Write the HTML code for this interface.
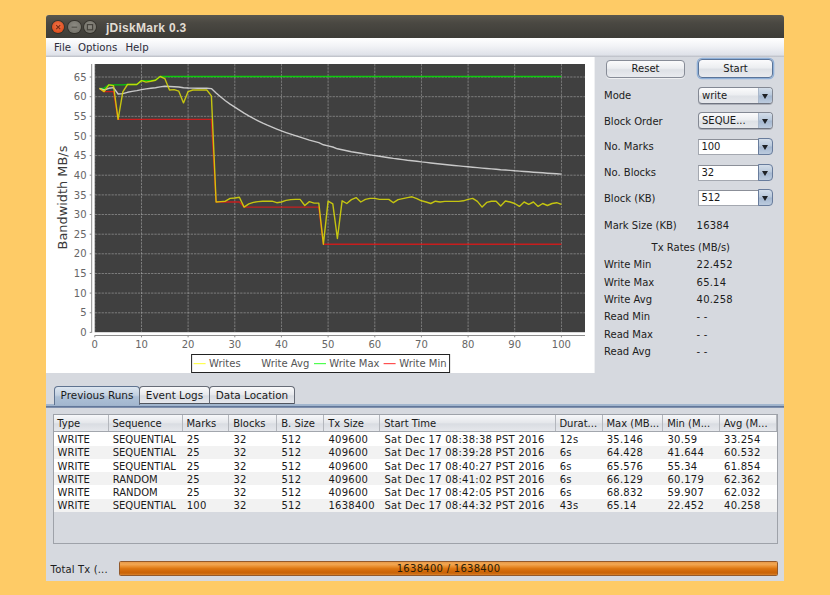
<!DOCTYPE html>
<html><head><meta charset="utf-8"><title>jDiskMark 0.3</title>
<style>
html,body{margin:0;padding:0}
body{width:830px;height:595px;overflow:hidden;background:#fecb66;position:relative;font-family:"DejaVu Sans","Liberation Sans",sans-serif;font-size:10px;color:#1a1a1a}
div,span{box-sizing:border-box}
.win{position:absolute;left:46px;top:15px;width:738.4px;height:566px;background:#d6d9df;border-radius:3px 3px 0 0;overflow:hidden}
.title{position:absolute;left:46px;top:15px;width:738.4px;height:23px;border-radius:3px 3px 0 0;background:linear-gradient(#5a574e,#4a4842 35%,#3d3c37);}
.title b{position:absolute;left:105.2px;top:19.6px;font-family:"Liberation Sans","DejaVu Sans",sans-serif;font-weight:bold;font-size:12px;color:#e2ddd4;line-height:14px;white-space:nowrap;letter-spacing:0.3px}
.abs{position:absolute}
.wb{position:absolute;top:21px;width:12.4px;height:12.4px;border-radius:50%;box-shadow:0 0 0 0.9px rgba(45,43,38,.75)}
.menu{position:absolute;left:46px;top:38px;width:738.4px;height:19px;background:linear-gradient(#ffffff,#f3f4f7 40%,#dfe2e9 88%,#b9bcc4);}
.menu span{position:absolute;top:41px;line-height:13px;font-size:10.2px;color:#2b2b3a}
.chart{position:absolute;left:0;top:0}
.gr{stroke:#d8d8d8;stroke-width:0.8;stroke-dasharray:2.3 1;opacity:.5}
.ax{stroke:#8c8c8c;stroke-width:1}
.tl{font-size:10px;fill:#666}
.al{font-size:12.9px;fill:#3a3a3a}
.lg{font-size:10px;fill:#555}
.s{fill:none;stroke-width:1.4;stroke-linejoin:round;opacity:.85}
.lb{position:absolute;line-height:14px;font-size:10px;white-space:nowrap;color:#1c1c1c}
.vl{letter-spacing:0.2px}
.btn{position:absolute;height:17.6px;border-radius:4px;border:1px solid #878c97;background:linear-gradient(#fbfbfc,#eceef1 45%,#dee1e6 55%,#e9ebef);text-align:center;line-height:15.4px;font-size:10px;box-shadow:0 1px 0 rgba(255,255,255,.6)}
.cb{position:absolute;left:698px;width:75px;height:17px;border-radius:4px;border:1px solid #838893;border-bottom-color:#6f7480;background:linear-gradient(#fbfbfc,#eceef1 45%,#dee1e6 55%,#e6e8ec);overflow:hidden;box-shadow:0 1px 0.5px rgba(60,65,80,.28)}
.cb .tx{position:absolute;left:3px;top:0.6px;line-height:14px;font-size:10px}
.cb .ar{position:absolute;right:0;top:0;width:14.4px;height:100%;border-left:1px solid #aab8cb;background:linear-gradient(#d3dde9,#b8c8db 48%,#a4b7d0 52%,#bccbde)}
.cb .ar i{position:absolute;left:3.4px;top:5.8px;width:0;height:0;border-left:3.4px solid transparent;border-right:3.4px solid transparent;border-top:5px solid #1e2126}
.cb.ed{background:none;border:none;border-radius:0;overflow:visible;box-shadow:none}
.cb.ed .fld{position:absolute;left:0;top:1px;width:61.4px;height:16px;background:#fff;border:1px solid #a4a8b0;border-top-color:#8b8f98}
.cb.ed .tx{left:3.4px;top:1.6px}
.cb.ed .ar{border:1px solid #687c9c;border-radius:0 4px 4px 0;width:14.6px;height:17.4px}
.cb.ed .ar i{left:2.8px;top:5.6px}
.tabline{position:absolute;left:46px;top:404px;width:738.4px;height:3.6px;background:linear-gradient(#a3b7cf,#a0b4cc 40%,#62779a 55%,#62779a 82%,#c0c8d6)}
.tab{position:absolute;top:386px;height:18px;border:1px solid #676c77;border-bottom-color:#50555f;border-radius:4px 4px 1px 1px;background:linear-gradient(#fafafb,#e6e8ec 50%,#d8dbe1 55%,#e6e8ed);font-size:10.45px;line-height:16.6px;text-align:center;white-space:nowrap}
.tab.sel{background:linear-gradient(#dde6f0,#c3d1e1 45%,#adc0d6 55%,#a3b7cf);border-color:#5f7390;border-bottom:none;border-radius:4px 4px 0 0;height:19px}
.tbl{position:absolute;left:53px;top:414px;width:725px;height:130px;border:1px solid #9ea2a9;background:#d6d9df}
.thead{position:absolute;left:54px;top:415px;width:723px;height:17px;background:linear-gradient(#f7f8fa,#e4e6ea 50%,#d9dce2 55%,#e6e8ec);border-bottom:1px solid #a2a6ad}
.th{position:absolute;top:415px;height:16.4px;border-right:1px solid #b4b7bd;}
.th span{position:absolute;left:3.8px;top:2px;line-height:14px;font-size:10px;white-space:nowrap}
.tr{position:absolute;left:54px;width:723px;height:13.25px}
.tr span{position:absolute;top:0.7px;line-height:14px;font-size:10px;white-space:nowrap}
.pb{position:absolute;left:119px;top:561px;width:659px;height:14.6px;border:1px solid #93592a;border-radius:1.5px;letter-spacing:0.28px;background:linear-gradient(#e89a48,#f2a651 18%,#e88a28 38%,#dd7814 50%,#d06808 70%,#c96306 85%,#d9832c);text-align:center;line-height:13.4px;font-size:10px;color:#2a1c08}
</style></head><body>
<div class="win"></div>
<div class="title"></div>
<div class="wb" style="left:52px;background:radial-gradient(circle at 50% 40%,#f0744a,#df4f1f 70%,#b8431b)"></div>
<div class="wb" style="left:68.2px;background:radial-gradient(circle at 50% 40%,#8c8a82,#77756d 70%,#5b5952)"></div>
<div class="wb" style="left:83.8px;background:radial-gradient(circle at 50% 40%,#8c8a82,#77756d 70%,#5b5952)"></div>
<svg class="abs" style="left:0;top:0" width="120" height="40" viewBox="0 0 120 40">
<path d="M56.2 25.2 L60.2 29.2 M60.2 25.2 L56.2 29.2" stroke="#7a2c14" stroke-width="1.2" fill="none"/>
<path d="M71.6 27.2 H77.2" stroke="#55534c" stroke-width="1.2" fill="none"/>
<rect x="87.4" y="24.6" width="5.2" height="5.2" stroke="#46443e" stroke-width="1.2" fill="none"/>
</svg>
<div class="title" style="background:none"><b style="left:59.9px;top:5.5px">jDiskMark 0.3</b></div>
<div class="menu"></div>
<div class="menu" style="background:none"><span style="left:8px;top:3px">File</span><span style="left:32px;top:3px">Options</span><span style="left:79.4px;top:3px">Help</span></div>
<svg class="chart" width="830" height="595" viewBox="0 0 830 595">
<rect x="46" y="57" width="548.6" height="316" fill="#fff"/>
<rect x="94.7" y="64" width="490.3" height="268.2" fill="#404040"/>
<line x1="95" x2="585" y1="332.4" y2="332.4" class="gr"/><line x1="95" x2="585" y1="312.8" y2="312.8" class="gr"/><line x1="95" x2="585" y1="293.1" y2="293.1" class="gr"/><line x1="95" x2="585" y1="273.5" y2="273.5" class="gr"/><line x1="95" x2="585" y1="253.8" y2="253.8" class="gr"/><line x1="95" x2="585" y1="234.2" y2="234.2" class="gr"/><line x1="95" x2="585" y1="214.5" y2="214.5" class="gr"/><line x1="95" x2="585" y1="194.9" y2="194.9" class="gr"/><line x1="95" x2="585" y1="175.2" y2="175.2" class="gr"/><line x1="95" x2="585" y1="155.6" y2="155.6" class="gr"/><line x1="95" x2="585" y1="135.9" y2="135.9" class="gr"/><line x1="95" x2="585" y1="116.3" y2="116.3" class="gr"/><line x1="95" x2="585" y1="96.7" y2="96.7" class="gr"/><line x1="95" x2="585" y1="77.0" y2="77.0" class="gr"/><line y1="64" y2="332.4" x1="94.8" x2="94.8" class="gr"/><line y1="64" y2="332.4" x1="141.5" x2="141.5" class="gr"/><line y1="64" y2="332.4" x1="188.1" x2="188.1" class="gr"/><line y1="64" y2="332.4" x1="234.8" x2="234.8" class="gr"/><line y1="64" y2="332.4" x1="281.4" x2="281.4" class="gr"/><line y1="64" y2="332.4" x1="328.1" x2="328.1" class="gr"/><line y1="64" y2="332.4" x1="374.8" x2="374.8" class="gr"/><line y1="64" y2="332.4" x1="421.4" x2="421.4" class="gr"/><line y1="64" y2="332.4" x1="468.1" x2="468.1" class="gr"/><line y1="64" y2="332.4" x1="514.7" x2="514.7" class="gr"/><line y1="64" y2="332.4" x1="561.4" x2="561.4" class="gr"/>
<line x1="91.7" x2="91.7" y1="64" y2="332.6" class="ax"/>
<line x1="94.7" x2="585" y1="335.5" y2="335.5" class="ax"/>
<line x1="89.7" x2="91.7" y1="332.4" y2="332.4" class="ax"/><text x="86.6" y="336.0" text-anchor="end" class="tl">0</text><line x1="89.7" x2="91.7" y1="312.8" y2="312.8" class="ax"/><text x="86.6" y="316.4" text-anchor="end" class="tl">5</text><line x1="89.7" x2="91.7" y1="293.1" y2="293.1" class="ax"/><text x="86.6" y="296.7" text-anchor="end" class="tl">10</text><line x1="89.7" x2="91.7" y1="273.5" y2="273.5" class="ax"/><text x="86.6" y="277.1" text-anchor="end" class="tl">15</text><line x1="89.7" x2="91.7" y1="253.8" y2="253.8" class="ax"/><text x="86.6" y="257.4" text-anchor="end" class="tl">20</text><line x1="89.7" x2="91.7" y1="234.2" y2="234.2" class="ax"/><text x="86.6" y="237.8" text-anchor="end" class="tl">25</text><line x1="89.7" x2="91.7" y1="214.5" y2="214.5" class="ax"/><text x="86.6" y="218.1" text-anchor="end" class="tl">30</text><line x1="89.7" x2="91.7" y1="194.9" y2="194.9" class="ax"/><text x="86.6" y="198.5" text-anchor="end" class="tl">35</text><line x1="89.7" x2="91.7" y1="175.2" y2="175.2" class="ax"/><text x="86.6" y="178.8" text-anchor="end" class="tl">40</text><line x1="89.7" x2="91.7" y1="155.6" y2="155.6" class="ax"/><text x="86.6" y="159.2" text-anchor="end" class="tl">45</text><line x1="89.7" x2="91.7" y1="135.9" y2="135.9" class="ax"/><text x="86.6" y="139.5" text-anchor="end" class="tl">50</text><line x1="89.7" x2="91.7" y1="116.3" y2="116.3" class="ax"/><text x="86.6" y="119.9" text-anchor="end" class="tl">55</text><line x1="89.7" x2="91.7" y1="96.7" y2="96.7" class="ax"/><text x="86.6" y="100.3" text-anchor="end" class="tl">60</text><line x1="89.7" x2="91.7" y1="77.0" y2="77.0" class="ax"/><text x="86.6" y="80.6" text-anchor="end" class="tl">65</text><line y1="335.5" y2="337.3" x1="94.8" x2="94.8" class="ax"/><text y="347.6" x="94.8" text-anchor="middle" class="tl">0</text><line y1="335.5" y2="337.3" x1="141.5" x2="141.5" class="ax"/><text y="347.6" x="141.5" text-anchor="middle" class="tl">10</text><line y1="335.5" y2="337.3" x1="188.1" x2="188.1" class="ax"/><text y="347.6" x="188.1" text-anchor="middle" class="tl">20</text><line y1="335.5" y2="337.3" x1="234.8" x2="234.8" class="ax"/><text y="347.6" x="234.8" text-anchor="middle" class="tl">30</text><line y1="335.5" y2="337.3" x1="281.4" x2="281.4" class="ax"/><text y="347.6" x="281.4" text-anchor="middle" class="tl">40</text><line y1="335.5" y2="337.3" x1="328.1" x2="328.1" class="ax"/><text y="347.6" x="328.1" text-anchor="middle" class="tl">50</text><line y1="335.5" y2="337.3" x1="374.8" x2="374.8" class="ax"/><text y="347.6" x="374.8" text-anchor="middle" class="tl">60</text><line y1="335.5" y2="337.3" x1="421.4" x2="421.4" class="ax"/><text y="347.6" x="421.4" text-anchor="middle" class="tl">70</text><line y1="335.5" y2="337.3" x1="468.1" x2="468.1" class="ax"/><text y="347.6" x="468.1" text-anchor="middle" class="tl">80</text><line y1="335.5" y2="337.3" x1="514.7" x2="514.7" class="ax"/><text y="347.6" x="514.7" text-anchor="middle" class="tl">90</text><line y1="335.5" y2="337.3" x1="561.4" x2="561.4" class="ax"/><text y="347.6" x="561.4" text-anchor="middle" class="tl">100</text>
<text transform="translate(67,197.5) rotate(-90)" text-anchor="middle" class="al">Bandwidth MB/s</text>
<path d="M99.5,88.4 L104.1,88.4 L108.8,84.9 L113.5,84.9 L118.1,84.9 L122.8,84.9 L127.5,84.5 L132.1,84.5 L136.8,84.5 L141.5,80.6 L146.1,80.6 L150.8,80.6 L155.5,80.2 L160.1,76.5 L164.8,76.5 L169.5,76.5 L174.1,76.5 L178.8,76.5 L183.5,76.5 L188.1,76.5 L192.8,76.5 L197.5,76.5 L202.1,76.5 L206.8,76.5 L211.4,76.5 L216.1,76.5 L220.8,76.5 L225.4,76.5 L230.1,76.5 L234.8,76.5 L239.4,76.5 L244.1,76.5 L248.8,76.5 L253.4,76.5 L258.1,76.5 L262.8,76.5 L267.4,76.5 L272.1,76.5 L276.8,76.5 L281.4,76.5 L286.1,76.5 L290.8,76.5 L295.4,76.5 L300.1,76.5 L304.8,76.5 L309.4,76.5 L314.1,76.5 L318.8,76.5 L323.4,76.5 L328.1,76.5 L332.8,76.5 L337.4,76.5 L342.1,76.5 L346.8,76.5 L351.4,76.5 L356.1,76.5 L360.8,76.5 L365.4,76.5 L370.1,76.5 L374.8,76.5 L379.4,76.5 L384.1,76.5 L388.8,76.5 L393.4,76.5 L398.1,76.5 L402.8,76.5 L407.4,76.5 L412.1,76.5 L416.8,76.5 L421.4,76.5 L426.1,76.5 L430.8,76.5 L435.4,76.5 L440.1,76.5 L444.8,76.5 L449.4,76.5 L454.1,76.5 L458.7,76.5 L463.4,76.5 L468.1,76.5 L472.7,76.5 L477.4,76.5 L482.1,76.5 L486.7,76.5 L491.4,76.5 L496.1,76.5 L500.7,76.5 L505.4,76.5 L510.1,76.5 L514.7,76.5 L519.4,76.5 L524.1,76.5 L528.7,76.5 L533.4,76.5 L538.1,76.5 L542.7,76.5 L547.4,76.5 L552.1,76.5 L556.7,76.5 L561.4,76.5" class="s" stroke="#00e000"/>
<path d="M99.5,88.4 L104.1,91.6 L108.8,91.6 L113.5,91.6 L118.1,119.4 L122.8,119.4 L127.5,119.4 L132.1,119.4 L136.8,119.4 L141.5,119.4 L146.1,119.4 L150.8,119.4 L155.5,119.4 L160.1,119.4 L164.8,119.4 L169.5,119.4 L174.1,119.4 L178.8,119.4 L183.5,119.4 L188.1,119.4 L192.8,119.4 L197.5,119.4 L202.1,119.4 L206.8,119.4 L211.4,119.4 L216.1,202.0 L220.8,202.0 L225.4,202.0 L230.1,202.0 L234.8,202.0 L239.4,202.0 L244.1,207.1 L248.8,207.1 L253.4,207.1 L258.1,207.1 L262.8,207.1 L267.4,207.1 L272.1,207.1 L276.8,207.1 L281.4,207.1 L286.1,207.1 L290.8,207.1 L295.4,207.1 L300.1,207.1 L304.8,207.1 L309.4,207.1 L314.1,207.1 L318.8,207.1 L323.4,244.2 L328.1,244.2 L332.8,244.2 L337.4,244.2 L342.1,244.2 L346.8,244.2 L351.4,244.2 L356.1,244.2 L360.8,244.2 L365.4,244.2 L370.1,244.2 L374.8,244.2 L379.4,244.2 L384.1,244.2 L388.8,244.2 L393.4,244.2 L398.1,244.2 L402.8,244.2 L407.4,244.2 L412.1,244.2 L416.8,244.2 L421.4,244.2 L426.1,244.2 L430.8,244.2 L435.4,244.2 L440.1,244.2 L444.8,244.2 L449.4,244.2 L454.1,244.2 L458.7,244.2 L463.4,244.2 L468.1,244.2 L472.7,244.2 L477.4,244.2 L482.1,244.2 L486.7,244.2 L491.4,244.2 L496.1,244.2 L500.7,244.2 L505.4,244.2 L510.1,244.2 L514.7,244.2 L519.4,244.2 L524.1,244.2 L528.7,244.2 L533.4,244.2 L538.1,244.2 L542.7,244.2 L547.4,244.2 L552.1,244.2 L556.7,244.2 L561.4,244.2" class="s" stroke="#e01818"/>
<path d="M99.5,88.4 L104.1,90.0 L108.8,88.3 L113.5,87.6 L118.1,94.0 L122.8,93.6 L127.5,92.3 L132.1,91.4 L136.8,90.6 L141.5,89.6 L146.1,88.9 L150.8,88.3 L155.5,87.7 L160.1,86.9 L164.8,86.3 L169.5,86.5 L174.1,86.7 L178.8,87.0 L183.5,87.8 L188.1,88.0 L192.8,88.1 L197.5,88.2 L202.1,88.2 L206.8,88.3 L211.4,88.6 L216.1,93.0 L220.8,97.0 L225.4,100.7 L230.1,104.1 L234.8,107.2 L239.4,110.1 L244.1,113.2 L248.8,115.9 L253.4,118.4 L258.1,120.8 L262.8,123.1 L267.4,125.2 L272.1,127.2 L276.8,129.1 L281.4,130.9 L286.1,132.6 L290.8,134.2 L295.4,135.7 L300.1,137.2 L304.8,138.7 L309.4,140.1 L314.1,141.4 L318.8,142.7 L323.4,144.8 L328.1,145.9 L332.8,147.0 L337.4,148.8 L342.1,149.8 L346.8,150.8 L351.4,151.7 L356.1,152.5 L360.8,153.3 L365.4,154.1 L370.1,154.9 L374.8,155.6 L379.4,156.3 L384.1,157.0 L388.8,157.7 L393.4,158.4 L398.1,159.0 L402.8,159.6 L407.4,160.2 L412.1,160.7 L416.8,161.3 L421.4,161.9 L426.1,162.4 L430.8,163.0 L435.4,163.5 L440.1,164.0 L444.8,164.5 L449.4,165.0 L454.1,165.5 L458.7,165.9 L463.4,166.4 L468.1,166.8 L472.7,167.2 L477.4,167.6 L482.1,168.1 L486.7,168.5 L491.4,168.9 L496.1,169.3 L500.7,169.7 L505.4,170.0 L510.1,170.4 L514.7,170.8 L519.4,171.1 L524.1,171.5 L528.7,171.8 L533.4,172.2 L538.1,172.5 L542.7,172.8 L547.4,173.2 L552.1,173.5 L556.7,173.8 L561.4,174.1" class="s" stroke="#e0e0e0"/>
<path d="M99.5,88.4 L104.1,91.6 L108.8,84.9 L113.5,85.7 L118.1,119.4 L122.8,91.9 L127.5,84.5 L132.1,84.5 L136.8,84.5 L141.5,80.6 L146.1,82.1 L150.8,81.3 L155.5,80.2 L160.1,76.5 L164.8,78.6 L169.5,90.0 L174.1,89.6 L178.8,91.2 L183.5,102.9 L188.1,91.6 L192.8,90.0 L197.5,90.0 L202.1,90.0 L206.8,90.0 L211.4,95.9 L216.1,202.0 L220.8,201.6 L225.4,201.2 L230.1,198.4 L234.8,198.0 L239.4,197.2 L244.1,207.1 L248.8,203.9 L253.4,202.4 L258.1,201.6 L262.8,201.2 L267.4,201.2 L272.1,201.2 L276.8,202.7 L281.4,202.0 L286.1,200.4 L290.8,199.6 L295.4,199.4 L300.1,199.4 L304.8,205.5 L309.4,201.6 L314.1,203.1 L318.8,203.1 L323.4,244.2 L328.1,201.2 L332.8,203.9 L337.4,238.5 L342.1,200.8 L346.8,203.5 L351.4,199.6 L356.1,197.6 L360.8,202.0 L365.4,199.4 L370.1,198.4 L374.8,198.4 L379.4,199.4 L384.1,199.4 L388.8,199.4 L393.4,202.7 L398.1,199.6 L402.8,198.6 L407.4,197.6 L412.1,196.8 L416.8,198.6 L421.4,200.8 L426.1,202.0 L430.8,203.5 L435.4,201.2 L440.1,202.0 L444.8,201.4 L449.4,201.4 L454.1,201.4 L458.7,201.4 L463.4,200.8 L468.1,199.4 L472.7,198.4 L477.4,201.4 L482.1,207.1 L486.7,202.4 L491.4,201.2 L496.1,201.2 L500.7,205.9 L505.4,201.0 L510.1,202.0 L514.7,203.5 L519.4,206.4 L524.1,202.0 L528.7,204.3 L533.4,202.0 L538.1,206.4 L542.7,203.5 L547.4,205.5 L552.1,203.5 L556.7,202.7 L561.4,204.3" class="s" stroke="#dcdc08"/>
<rect x="191.6" y="354.5" width="258" height="18" fill="#fff" stroke="#222" stroke-width="1"/>
<line x1="193.6" x2="205.6" y1="363.6" y2="363.6" stroke="#ffff50" stroke-width="1.2"/>
<text x="209" y="367.2" class="lg">Writes</text>
<text x="261.2" y="367.2" class="lg">Write Avg</text>
<line x1="314" x2="326" y1="363.6" y2="363.6" stroke="#50ff50" stroke-width="1.2"/>
<text x="329.2" y="367.2" class="lg">Write Max</text>
<line x1="383.6" x2="395.6" y1="363.6" y2="363.6" stroke="#ff5050" stroke-width="1.2"/>
<text x="399.2" y="367.2" class="lg">Write Min</text>
</svg>
<div class="btn" style="left:606px;top:60px;width:79px;height:18px;line-height:16px">Reset</div>
<div class="btn" style="left:698px;top:59px;width:75px;height:19px;border-color:#5a7499;box-shadow:0 0 0 1.3px #8fb0d8;line-height:18px">Start</div>
<div class="lb" style="left:604px;top:88.8px">Mode</div><div class="lb" style="left:604px;top:115.1px">Block Order</div><div class="lb" style="left:604px;top:140.2px">No. Marks</div><div class="lb" style="left:604px;top:165.8px">No. Blocks</div><div class="lb" style="left:604px;top:191.8px">Block (KB)</div><div class="lb" style="left:604px;top:219.0px">Mark Size (KB)</div><div class="lb" style="left:604px;top:258.2px">Write Min</div><div class="lb" style="left:604px;top:275.5px">Write Max</div><div class="lb" style="left:604px;top:292.8px">Write Avg</div><div class="lb" style="left:604px;top:310.2px">Read Min</div><div class="lb" style="left:604px;top:327.5px">Read Max</div><div class="lb" style="left:604px;top:344.8px">Read Avg</div><div class="lb vl" style="left:696.6px;top:219.0px">16384</div><div class="lb vl" style="left:696.6px;top:258.2px">22.452</div><div class="lb vl" style="left:696.6px;top:275.5px">65.14</div><div class="lb vl" style="left:696.6px;top:292.8px">40.258</div><div class="lb vl" style="left:696.6px;top:310.2px">- -</div><div class="lb vl" style="left:696.6px;top:327.5px">- -</div><div class="lb vl" style="left:696.6px;top:344.8px">- -</div><div class="lb" style="left:651.6px;top:240.8px">Tx Rates (MB/s)</div><div class="cb" style="top:87.0px"><span class="tx">write</span><span class="ar"><i></i></span></div><div class="cb" style="top:112.0px"><span class="tx">SEQUE...</span><span class="ar"><i></i></span></div><div class="cb ed" style="top:138.0px"><span class="fld"></span><span class="tx">100</span><span class="ar"><i></i></span></div><div class="cb ed" style="top:164.0px"><span class="fld"></span><span class="tx">32</span><span class="ar"><i></i></span></div><div class="cb ed" style="top:189.0px"><span class="fld"></span><span class="tx">512</span><span class="ar"><i></i></span></div>
<div class="tabline"></div>
<div class="tab sel" style="left:54px;width:86px">Previous Runs</div>
<div class="tab" style="left:139px;width:71px">Event Logs</div>
<div class="tab" style="left:209px;width:86px">Data Location</div>
<div class="tbl"></div><div class="thead"></div><div class="th" style="left:53.5px;width:55.1px"><span>Type</span></div><div class="th" style="left:108.6px;width:74.0px"><span>Sequence</span></div><div class="th" style="left:182.6px;width:46.8px"><span>Marks</span></div><div class="th" style="left:229.4px;width:48.0px"><span>Blocks</span></div><div class="th" style="left:277.4px;width:47.0px"><span>B. Size</span></div><div class="th" style="left:324.4px;width:56.0px"><span>Tx Size</span></div><div class="th" style="left:380.4px;width:175.2px"><span>Start Time</span></div><div class="th" style="left:555.6px;width:47.0px"><span>Durat...</span></div><div class="th" style="left:602.6px;width:60.8px"><span>Max (MB...</span></div><div class="th" style="left:663.4px;width:56.6px"><span>Min (M...</span></div><div class="th" style="left:720.0px;width:57.0px"><span>Avg (M...</span></div><div class="tr" style="top:432.40px;background:#fff"><span style="left:3.6px">WRITE</span><span style="left:58.7px">SEQUENTIAL</span><span style="left:132.7px;letter-spacing:0.25px">25</span><span style="left:179.5px;letter-spacing:0.25px">32</span><span style="left:227.5px;letter-spacing:0.25px">512</span><span style="left:274.5px;letter-spacing:0.25px">409600</span><span style="left:330.5px;letter-spacing:0.25px">Sat Dec 17 08:38:38 PST 2016</span><span style="left:505.7px;letter-spacing:0.25px">12s</span><span style="left:552.7px;letter-spacing:0.25px">35.146</span><span style="left:613.5px;letter-spacing:0.25px">30.59</span><span style="left:670.1px;letter-spacing:0.25px">33.254</span></div><div class="tr" style="top:445.65px;background:#f2f2f2"><span style="left:3.6px">WRITE</span><span style="left:58.7px">SEQUENTIAL</span><span style="left:132.7px;letter-spacing:0.25px">25</span><span style="left:179.5px;letter-spacing:0.25px">32</span><span style="left:227.5px;letter-spacing:0.25px">512</span><span style="left:274.5px;letter-spacing:0.25px">409600</span><span style="left:330.5px;letter-spacing:0.25px">Sat Dec 17 08:39:28 PST 2016</span><span style="left:505.7px;letter-spacing:0.25px">6s</span><span style="left:552.7px;letter-spacing:0.25px">64.428</span><span style="left:613.5px;letter-spacing:0.25px">41.644</span><span style="left:670.1px;letter-spacing:0.25px">60.532</span></div><div class="tr" style="top:458.90px;background:#fff"><span style="left:3.6px">WRITE</span><span style="left:58.7px">SEQUENTIAL</span><span style="left:132.7px;letter-spacing:0.25px">25</span><span style="left:179.5px;letter-spacing:0.25px">32</span><span style="left:227.5px;letter-spacing:0.25px">512</span><span style="left:274.5px;letter-spacing:0.25px">409600</span><span style="left:330.5px;letter-spacing:0.25px">Sat Dec 17 08:40:27 PST 2016</span><span style="left:505.7px;letter-spacing:0.25px">6s</span><span style="left:552.7px;letter-spacing:0.25px">65.576</span><span style="left:613.5px;letter-spacing:0.25px">55.34</span><span style="left:670.1px;letter-spacing:0.25px">61.854</span></div><div class="tr" style="top:472.15px;background:#f2f2f2"><span style="left:3.6px">WRITE</span><span style="left:58.7px">RANDOM</span><span style="left:132.7px;letter-spacing:0.25px">25</span><span style="left:179.5px;letter-spacing:0.25px">32</span><span style="left:227.5px;letter-spacing:0.25px">512</span><span style="left:274.5px;letter-spacing:0.25px">409600</span><span style="left:330.5px;letter-spacing:0.25px">Sat Dec 17 08:41:02 PST 2016</span><span style="left:505.7px;letter-spacing:0.25px">6s</span><span style="left:552.7px;letter-spacing:0.25px">66.129</span><span style="left:613.5px;letter-spacing:0.25px">60.179</span><span style="left:670.1px;letter-spacing:0.25px">62.362</span></div><div class="tr" style="top:485.40px;background:#fff"><span style="left:3.6px">WRITE</span><span style="left:58.7px">RANDOM</span><span style="left:132.7px;letter-spacing:0.25px">25</span><span style="left:179.5px;letter-spacing:0.25px">32</span><span style="left:227.5px;letter-spacing:0.25px">512</span><span style="left:274.5px;letter-spacing:0.25px">409600</span><span style="left:330.5px;letter-spacing:0.25px">Sat Dec 17 08:42:05 PST 2016</span><span style="left:505.7px;letter-spacing:0.25px">6s</span><span style="left:552.7px;letter-spacing:0.25px">68.832</span><span style="left:613.5px;letter-spacing:0.25px">59.907</span><span style="left:670.1px;letter-spacing:0.25px">62.032</span></div><div class="tr" style="top:498.65px;background:#f2f2f2"><span style="left:3.6px">WRITE</span><span style="left:58.7px">SEQUENTIAL</span><span style="left:132.7px;letter-spacing:0.25px">100</span><span style="left:179.5px;letter-spacing:0.25px">32</span><span style="left:227.5px;letter-spacing:0.25px">512</span><span style="left:274.5px;letter-spacing:0.25px">1638400</span><span style="left:330.5px;letter-spacing:0.25px">Sat Dec 17 08:44:32 PST 2016</span><span style="left:505.7px;letter-spacing:0.25px">43s</span><span style="left:552.7px;letter-spacing:0.25px">65.14</span><span style="left:613.5px;letter-spacing:0.25px">22.452</span><span style="left:670.1px;letter-spacing:0.25px">40.258</span></div>
<div class="lb" style="left:50.6px;top:562.8px;letter-spacing:0.15px">Total Tx (...</div>
<div class="pb">1638400 / 1638400</div>
</body></html>
